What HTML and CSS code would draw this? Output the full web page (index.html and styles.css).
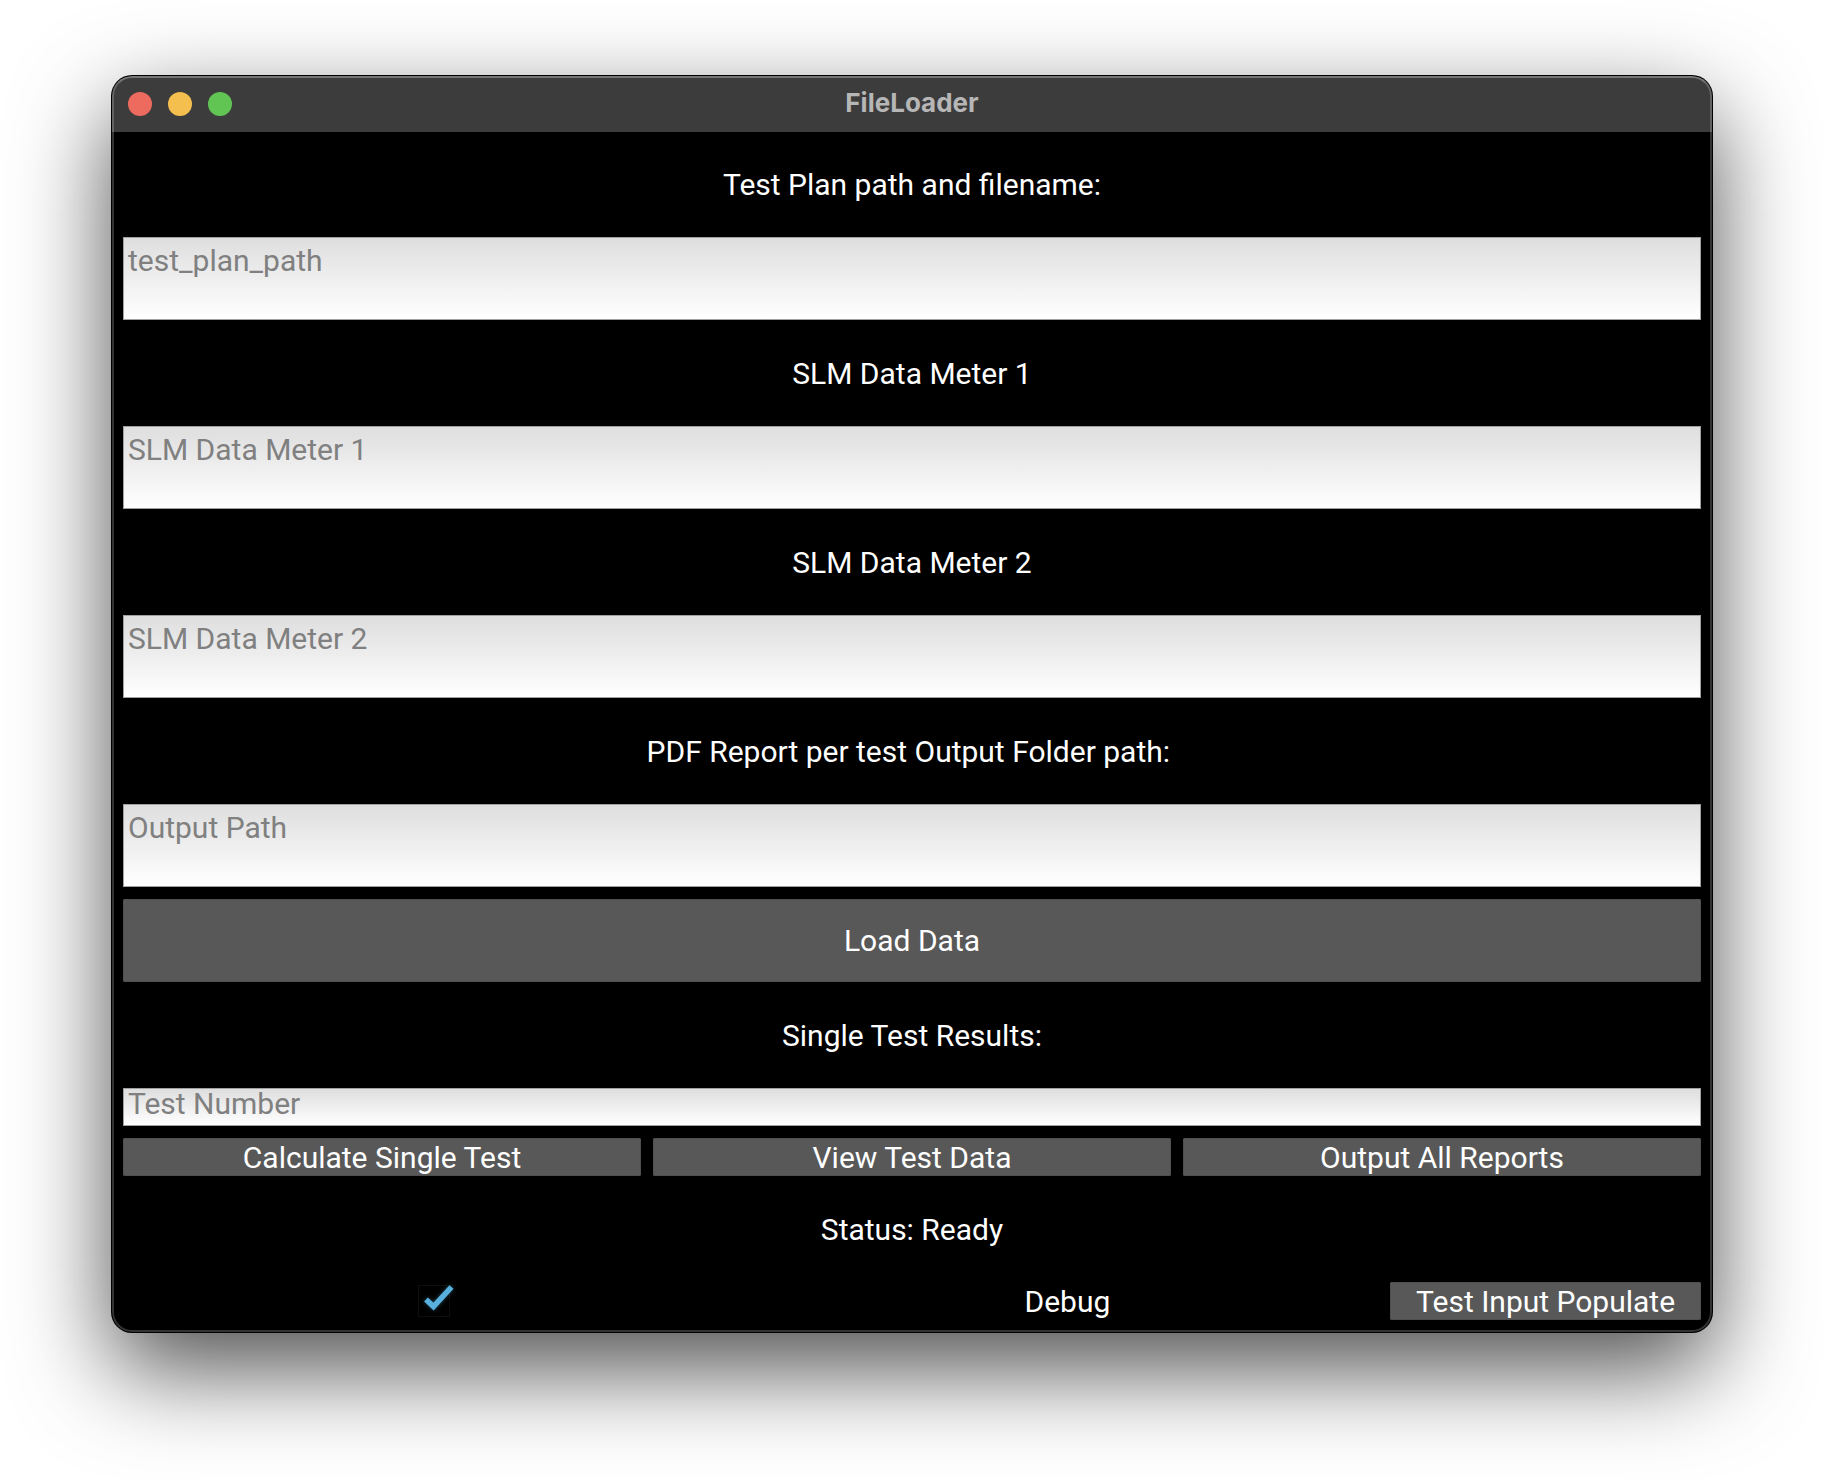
FILE: index.html
```html
<!DOCTYPE html>
<html lang="en">
<head>
<meta charset="utf-8">
<title>FileLoader</title>
<link rel="stylesheet" href="styles.css">
</head>
<body>
<main class="window">
  <header class="titlebar">
    <div class="lights">
      <button class="light light-close" type="button" aria-label="Close"></button>
      <button class="light light-minimize" type="button" aria-label="Minimize"></button>
      <button class="light light-zoom" type="button" aria-label="Zoom"></button>
    </div>
    <h1 class="title">FileLoader</h1>
  </header>
  <form class="content">
    <label class="caption" for="test-plan">Test Plan path and filename:</label>
    <textarea class="field" id="test-plan" placeholder="test_plan_path"></textarea>
    <label class="caption" for="meter-1">SLM Data Meter 1</label>
    <textarea class="field" id="meter-1" placeholder="SLM Data Meter 1"></textarea>
    <label class="caption" for="meter-2">SLM Data Meter 2</label>
    <textarea class="field" id="meter-2" placeholder="SLM Data Meter 2"></textarea>
    <label class="caption" for="output-path">PDF Report per test Output Folder path: </label>
    <textarea class="field" id="output-path" placeholder="Output Path"></textarea>
    <button class="button button-large" type="button">Load Data</button>
    <label class="caption" for="test-number">Single Test Results:</label>
    <textarea class="field field-small" id="test-number" placeholder="Test Number"></textarea>
    <div class="actions">
      <button class="button" type="button">Calculate Single Test</button>
      <button class="button" type="button">View Test Data</button>
      <button class="button" type="button">Output All Reports</button>
    </div>
    <output class="caption">Status: Ready</output>
    <div class="debug-row">
      <span class="check">
        <input class="check-input" type="checkbox" id="debug" checked>
        <svg class="check-mark" viewBox="0 0 64 38" aria-hidden="true">
          <path d="M24 17.500 31.500 24.500 49.500 5" fill="none" stroke="#58b0de" stroke-width="5.500"/>
        </svg>
      </span>
      <label class="debug-label" for="debug">Debug</label>
      <button class="button" type="button">Test Input Populate</button>
    </div>
  </form>
</main>
</body>
</html>
```
FILE: styles.css
```css
* {
  box-sizing: border-box;
}

body {
  margin: 0;
  padding: 76px 112px 148px;
  background: #fff;
  color: #fff;
  font-family: Roboto, "Liberation Sans", sans-serif;
  font-size: 30px;
  line-height: 36px;
}

.window {
  position: relative;
  overflow: hidden;
  border-radius: 20px;
  background: #000;
  box-shadow: 0 0 0 1px #000, 0 36px 96px rgba(0, 0, 0, 0.7);
}

/* Light rim along the inside edge of the window */
.window::after {
  content: "";
  position: absolute;
  inset: 0;
  border: 2px solid rgba(255, 255, 255, 0.2);
  border-top-color: rgba(255, 255, 255, 0.3);
  border-radius: 20px;
  pointer-events: none;
}

.titlebar {
  display: grid;
  grid-template-columns: 1fr auto 1fr;
  align-items: center;
  height: 56px;
  padding: 0 16px;
  background: #3c3c3c;
}

.lights {
  display: flex;
  gap: 16px;
}

.light {
  width: 24px;
  height: 24px;
  padding: 0;
  border: 0;
  border-radius: 50%;
}

.light-close { background: #ed6a5e; }
.light-minimize { background: #f5bf4f; }
.light-zoom { background: #61c554; }

.title {
  margin: 0;
  padding-bottom: 2px;
  color: #b6b6b6;
  font: 700 26px/32px Inter, "Liberation Sans", sans-serif;
}

.content {
  display: flex;
  flex-direction: column;
  gap: 12px;
  padding: 11px 11px 12px;
}

.caption {
  display: flex;
  align-items: center;
  justify-content: center;
  height: 82px;
  padding-top: 2px;
  white-space: pre;
}

.field {
  display: block;
  width: 100%;
  height: 83px;
  margin: 0;
  padding: 5px 4px;
  overflow: hidden;
  resize: none;
  border: 1px solid #a0a0a0;
  border-radius: 0;
  background: linear-gradient(#dedede, #fff);
  color: #000;
  font: inherit;
}

.field::placeholder {
  color: #808080;
  opacity: 1;
}

.field-small {
  height: 38px;
  padding: 0 4px;
  line-height: 30px;
}

.button {
  height: 38px;
  padding: 2px 0 0;
  border: 0;
  border-radius: 2px;
  background: #585858;
  box-shadow: inset 0 0 0 1px #505050;
  color: #fff;
  font: inherit;
}

.button-large {
  height: 83px;
  padding: 0;
}

.actions {
  display: grid;
  grid-template-columns: repeat(3, 1fr);
  gap: 12px;
}

.debug-row {
  display: grid;
  grid-template-columns: 2fr 2fr 1fr;
  align-items: center;
  gap: 12px;
}

.debug-label {
  padding-top: 2px;
  text-align: center;
}

.check {
  display: grid;
  place-items: center;
}

.check-input,
.check-mark {
  grid-area: 1 / 1;
}

.check-input {
  appearance: none;
  width: 32px;
  height: 32px;
  margin: 0;
  border: 1px solid #0e0e0e;
}

.check-mark {
  width: 64px;
  height: 38px;
  pointer-events: none;
  filter: drop-shadow(0 0 2px rgba(88, 176, 222, 0.4));
}

.check-input:not(:checked) + .check-mark {
  visibility: hidden;
}
```
